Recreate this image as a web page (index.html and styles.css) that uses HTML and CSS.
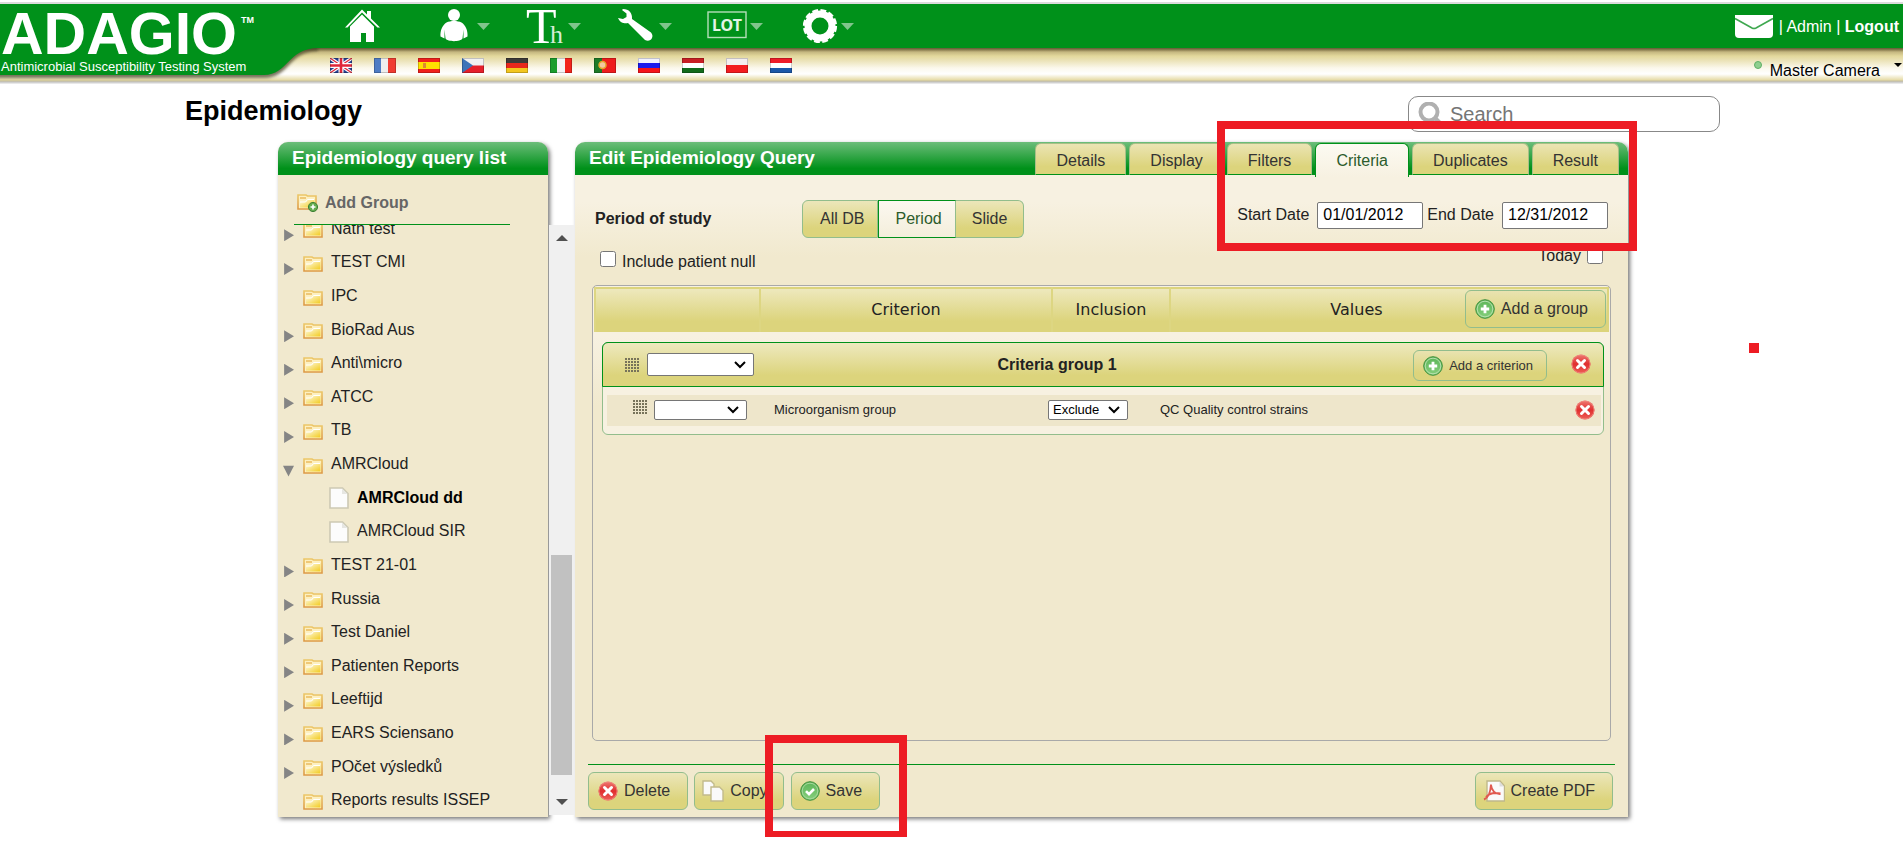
FILE: index.html
```html
<!DOCTYPE html>
<html lang="en">
<head>
<meta charset="utf-8">
<title>ADAGIO - Epidemiology</title>
<link rel="stylesheet" href="styles.css">
</head>
<body>
<svg class="defs" aria-hidden="true">
  <defs>
    <linearGradient id="gFolder" x1="0" y1="0" x2="1" y2="1"><stop offset="0" stop-color="#fffbe6"/><stop offset="1" stop-color="#f2cb1e"/></linearGradient>
    <linearGradient id="gFolderEdge" x1="0" y1="0" x2="0" y2="1"><stop offset="0" stop-color="#ecc768"/><stop offset="1" stop-color="#dd9a45"/></linearGradient>
    <linearGradient id="gGreen" x1="0" y1="0" x2="0" y2="1"><stop offset="0" stop-color="#5cb558"/><stop offset="1" stop-color="#86cf7c"/></linearGradient>
    <linearGradient id="gRed" x1="0" y1="0" x2="0" y2="1"><stop offset="0" stop-color="#ee7a72"/><stop offset=".5" stop-color="#e02f2f"/><stop offset="1" stop-color="#ee6058"/></linearGradient>
    <symbol id="folder" viewBox="0 0 20 16">
      <path d="M1 1h8l1.500 1H19v13H1z" fill="#fdf0c0" stroke="url(#gFolderEdge)" stroke-width="1.600"/>
      <path d="M3 3h6v2H3z" fill="#efc877"/>
      <path d="M3 13.500V8h6l2-2.500h6.500v8z" fill="url(#gFolder)"/>
      <path d="M3 8h5.500l2-2.500H17" fill="none" stroke="#fff" stroke-width="1"/>
    </symbol>
    <symbol id="file" viewBox="0 0 20 22">
      <path d="M1 1h12.500L19 6.500V21H1z" fill="#fcfcfc" stroke="#cdc9b4" stroke-width="1.600"/>
      <path d="M13 1.500V7h5.500z" fill="#e6e6e2"/>
    </symbol>
    <symbol id="cross" viewBox="0 0 20 20">
      <circle cx="10" cy="10" r="9.500" fill="url(#gRed)"/><circle cx="10" cy="10" r="9" fill="none" stroke="#f08a80" stroke-width=".8"/>
      <path d="M6.500 6.500l7 7M13.500 6.500l-7 7" stroke="#fff" stroke-width="3" stroke-linecap="round"/>
    </symbol>
    <symbol id="plus" viewBox="0 0 20 20">
      <circle cx="10" cy="10" r="9.300" fill="url(#gGreen)" stroke="#3f8f3d" stroke-width="1"/><circle cx="10" cy="10" r="7.800" fill="none" stroke="#b5dfae" stroke-width="1"/>
      <path d="M10 5.800v8.400M5.800 10h8.400" stroke="#fff" stroke-width="2.800"/>
    </symbol>
    <symbol id="check" viewBox="0 0 20 20">
      <circle cx="10" cy="10" r="9.300" fill="url(#gGreen)" stroke="#3f8f3d" stroke-width="1"/><circle cx="10" cy="10" r="7.800" fill="none" stroke="#a5d79d" stroke-width="1"/>
      <path d="M6 10.200l3 3 5-5.200" fill="none" stroke="#fff" stroke-width="2.600"/>
    </symbol>
    <symbol id="grip" viewBox="0 0 14 14">
      <path d="M0 1h14M0 4h14M0 7h14M0 10h14M0 13h14" stroke="#77735a" stroke-width="2" stroke-dasharray="2 1"/>
    </symbol>
    <symbol id="caret" viewBox="0 0 13 7"><path d="M0 0h13L6.500 7z" fill="#80c58c"/></symbol>
  </defs>
</svg>

<header class="top">
  <div class="bar-green"></div>
  <div class="bar-gold"></div>
  <svg class="logo-shape" width="330" height="44" viewBox="0 0 330 44" aria-hidden="true">
    <defs><filter id="soft" x="-5%" y="-20%" width="110%" height="150%"><feGaussianBlur stdDeviation="1.500"/></filter></defs>
    <path d="M-10-10V28H264C290 28 288 1 318 1V-10z" fill="#4d472c" opacity=".75" filter="url(#soft)" transform="translate(0 2)"/>
    <path d="M0 0V27H264C288 27 288 0 318 0z" fill="#00911a"/>
  </svg>
  <a class="logo" href="#">
    <span class="logo-name">ADAGIO<span class="tm">TM</span></span>
    <span class="logo-sub">Antimicrobial Susceptibility Testing System</span>
  </a>
  <nav class="nav" aria-label="Main">
    <a href="#" aria-label="Home"><svg width="40" height="36" viewBox="0 0 40 36"><path d="M5 18.500L17 6.500l12 12V34H21v-9h-5v9H5z" fill="#fff"/><path d="M0 19.500L17 1.500l5 5V3h4v7.500l9 9h-2.500L17 4.500 2.500 19.500z" fill="#fff"/></svg></a>
    <a href="#" aria-label="Patients"><svg width="40" height="36" viewBox="0 0 40 36"><circle cx="18" cy="7" r="6" fill="#fff"/><path d="M10.500 14.500c4-2 11-2 15 0 4 2.500 6.500 8 6 14l-4 2v-9l-1 9c-2 3.500-15 3.500-17 0l-1-9v9l-4-2c-.5-6 2-11.500 6-14z" fill="#fff"/></svg><svg width="13" height="7"><use href="#caret"/></svg></a>
    <a href="#" aria-label="Therapy"><svg width="40" height="36" viewBox="0 0 40 36"><text x="-1" y="35" class="glyph-t">T</text><text x="23" y="35" class="glyph-h">h</text></svg><svg width="13" height="7"><use href="#caret"/></svg></a>
    <a href="#" aria-label="Tools"><svg width="40" height="36" viewBox="0 0 40 36"><path d="M0 10c2 5 7 6 10 5l17 17c5 3 10-3 6-7.500L14 11C14.500 5 11 1 5 1l-1 1 4.500 3.500V9L5 11z" fill="#fff"/></svg><svg width="13" height="7"><use href="#caret"/></svg></a>
    <a href="#" aria-label="Lot"><svg width="40" height="36" viewBox="0 0 40 36"><rect x="-1" y="4" width="38" height="25.500" fill="none" stroke="#b4deba" stroke-width="1.400"/><text x="18" y="22.500" text-anchor="middle" class="glyph-lot">LOT</text></svg><svg width="13" height="7"><use href="#caret"/></svg></a>
    <a href="#" aria-label="Settings"><svg width="40" height="36" viewBox="0 0 40 36"><circle cx="20" cy="18" r="12" fill="none" stroke="#fff" stroke-width="7"/><circle cx="20" cy="18" r="15.300" fill="none" stroke="#fff" stroke-width="3.600" stroke-dasharray="5.600 2.411"/></svg><svg width="13" height="7"><use href="#caret"/></svg></a>
  </nav>
  <div class="flags">
    <button aria-label="English"><svg viewBox="0 0 22 15"><path fill="#27408f" d="M0 0h22v15H0z"/><path d="M0 0l22 15M22 0L0 15" stroke="#fff" stroke-width="3.500"/><path d="M0 0l22 15M22 0L0 15" stroke="#e0263a" stroke-width="1.200"/><path d="M11 0v15M0 7.500h22" stroke="#fff" stroke-width="5"/><path d="M11 0v15M0 7.500h22" stroke="#e0263a" stroke-width="2.600"/></svg></button>
    <button aria-label="French"><svg viewBox="0 0 22 15"><path fill="#4f7cc4" d="M0 0h8v15H0z"/><path fill="#eee" d="M7 0h8v15H7z"/><path fill="#f03c32" d="M14 0h8v15h-8z"/></svg></button>
    <button aria-label="Spanish"><svg viewBox="0 0 22 15"><path fill="#f0201c" d="M0 0h22v15H0z"/><path fill="#ffe000" d="M0 4h22v7H0z"/><path fill="#dd8a30" d="M5 5h3v5H5z"/></svg></button>
    <button aria-label="Czech"><svg viewBox="0 0 22 15"><path fill="#f1f1f1" d="M0 0h22v8H0z"/><path fill="#e5202a" d="M0 7.500h22V15H0z"/><path fill="#3d74b8" d="M0 0l11 7.500L0 15z"/></svg></button>
    <button aria-label="German"><svg viewBox="0 0 22 15"><path fill="#3d3a38" d="M0 0h22v5H0z"/><path fill="#e8271c" d="M0 5h22v5H0z"/><path fill="#f3c61e" d="M0 10h22v5H0z"/></svg></button>
    <button aria-label="Italian"><svg viewBox="0 0 22 15"><path fill="#1a9d2c" d="M0 0h8v15H0z"/><path fill="#f4f4f4" d="M7 0h8v15H7z"/><path fill="#f2241c" d="M15 0h7v15h-7z"/></svg></button>
    <button aria-label="Portuguese"><svg viewBox="0 0 22 15"><path fill="#1d7a27" d="M0 0h9v15H0z"/><path fill="#ee1c1c" d="M8 0h14v15H8z"/><circle cx="8.500" cy="7" r="3.500" fill="#f3c8a0" stroke="#e7a52a" stroke-width="1.500"/></svg></button>
    <button aria-label="Russian"><svg viewBox="0 0 22 15"><path fill="#f1f1ff" d="M0 0h22v5H0z"/><path fill="#1a1aee" d="M0 5h22v5H0z"/><path fill="#f5141c" d="M0 10h22v5H0z"/></svg></button>
    <button aria-label="Hungarian"><svg viewBox="0 0 22 15"><path fill="#c81e24" d="M0 0h22v5H0z"/><path fill="#fff" d="M0 5h22v5H0z"/><path fill="#126b1c" d="M0 10h22v5H0z"/></svg></button>
    <button aria-label="Polish"><svg viewBox="0 0 22 15"><path fill="#f4eff0" d="M0 0h22v8H0z"/><path fill="#f31c20" d="M0 7h22v8H0z"/></svg></button>
    <button aria-label="Dutch"><svg viewBox="0 0 22 15"><path fill="#ee1c28" d="M0 0h22v5H0z"/><path fill="#fff" d="M0 5h22v5H0z"/><path fill="#1c58a8" d="M0 10h22v5H0z"/></svg></button>
  </div>
  <div class="account">
    <a href="#" aria-label="Messages"><svg width="38" height="23" viewBox="0 0 38 23"><path d="M0 0h38v19q0 4-4 4H4q-4 0-4-4z" fill="#fff"/><path d="M0 3.500L17 13q2 1 4 0L38 3.500" fill="none" stroke="#3fa850" stroke-width="1.600"/></svg></a>
    <span>| <a href="#">Admin</a> | <a href="#"><b>Logout</b></a></span>
  </div>
  <button class="camera"><i class="dot"></i><span>Master Camera</span><i class="tri"></i></button>
</header>

<div class="page-head">
  <h1>Epidemiology</h1>
  <label class="search">
    <svg width="24" height="24" viewBox="0 0 24 24" aria-hidden="true"><circle cx="11" cy="10" r="8.500" fill="none" stroke="#b0b0b0" stroke-width="4"/><path d="M16.500 15.500l6 6" stroke="#b0b0b0" stroke-width="4"/></svg>
    <input type="search" placeholder="Search" aria-label="Search">
  </label>
</div>

<main class="main">
  <section class="panel list-panel">
    <header class="panel-head"><h2>Epidemiology query list</h2></header>
    <button class="add-group"><svg width="22" height="19" viewBox="0 0 22 19"><use href="#folder" width="20" height="16"/><circle cx="16" cy="13" r="4.600" fill="#63ab4e" stroke="#3f8136"/><path d="M16 10.500v5M13.500 13h5" stroke="#fff" stroke-width="1.600"/></svg>Add Group</button>
    <div class="tree-view">
      <ul class="tree">
        <li><i class="tw"></i><svg><use href="#folder"/></svg>Nath test</li>
        <li><i class="tw"></i><svg><use href="#folder"/></svg>TEST CMI</li>
        <li><i class="tw none"></i><svg><use href="#folder"/></svg>IPC</li>
        <li><i class="tw"></i><svg><use href="#folder"/></svg>BioRad Aus</li>
        <li><i class="tw"></i><svg><use href="#folder"/></svg>Anti\micro</li>
        <li><i class="tw"></i><svg><use href="#folder"/></svg>ATCC</li>
        <li><i class="tw"></i><svg><use href="#folder"/></svg>TB</li>
        <li><i class="tw open"></i><svg><use href="#folder"/></svg>AMRCloud</li>
        <li class="leaf current"><svg><use href="#file"/></svg>AMRCloud dd</li>
        <li class="leaf"><svg><use href="#file"/></svg>AMRCloud SIR</li>
        <li><i class="tw"></i><svg><use href="#folder"/></svg>TEST 21-01</li>
        <li><i class="tw"></i><svg><use href="#folder"/></svg>Russia</li>
        <li><i class="tw"></i><svg><use href="#folder"/></svg>Test Daniel</li>
        <li><i class="tw"></i><svg><use href="#folder"/></svg>Patienten Reports</li>
        <li><i class="tw"></i><svg><use href="#folder"/></svg>Leeftijd</li>
        <li><i class="tw"></i><svg><use href="#folder"/></svg>EARS Sciensano</li>
        <li><i class="tw"></i><svg><use href="#folder"/></svg>POčet výsledků</li>
        <li><i class="tw none"></i><svg><use href="#folder"/></svg>Reports results ISSEP</li>
      </ul>
    </div>
  </section>

  <div class="scroll" aria-hidden="true">
    <i class="up"></i>
    <div class="track"><div class="thumb"></div></div>
    <i class="down"></i>
  </div>

  <section class="panel edit-panel">
    <header class="panel-head">
      <h2>Edit Epidemiology Query</h2>
      <div class="tabs" role="tablist">
        <button role="tab">Details</button>
        <button role="tab">Display</button>
        <button role="tab">Filters</button>
        <button role="tab" class="active" aria-selected="true">Criteria</button>
        <button role="tab">Duplicates</button>
        <button role="tab">Result</button>
      </div>
    </header>

    <div class="period">
      <span class="period-label">Period of study</span>
      <div class="segments">
        <button>All DB</button><button class="active">Period</button><button>Slide</button>
      </div>
      <div class="dates">
        <label for="start">Start Date</label><input id="start" type="text" value="01/01/2012">
        <label for="end">End Date</label><input id="end" type="text" value="12/31/2012">
      </div>
    </div>
    <div class="options">
      <label class="include"><input type="checkbox">Include patient null</label>
      <label class="today">Today<input type="checkbox"></label>
    </div>

    <div class="criteria">
      <table class="criteria-head">
        <thead><tr>
          <th class="c-grip"></th><th class="c-crit">Criterion</th><th class="c-inc">Inclusion</th><th class="c-val">Values</th>
          <th class="c-act"><button class="btn clear add-top"><svg width="20" height="20"><use href="#plus"/></svg>Add a group</button></th>
        </tr></thead>
      </table>
      <div class="group">
        <div class="group-head">
          <div class="group-left"><svg width="14" height="14"><use href="#grip"/></svg><select aria-label="Group operator"><option></option></select></div>
          <h3>Criteria group 1</h3>
          <div class="group-right">
            <button class="btn clear small"><svg width="20" height="20"><use href="#plus"/></svg>Add a criterion</button>
            <button class="icon" aria-label="Remove group"><svg width="20" height="20"><use href="#cross"/></svg></button>
          </div>
        </div>
        <table class="rows">
          <tbody><tr>
            <td class="r-left"><div class="r-tools"><svg width="14" height="14"><use href="#grip"/></svg><select aria-label="Criterion operator"><option></option></select></div></td>
            <td class="r-crit">Microorganism group</td>
            <td class="r-inc"><select aria-label="Inclusion"><option>Exclude</option></select></td>
            <td>QC Quality control strains</td>
            <td class="r-act"><button class="icon" aria-label="Remove criterion"><svg width="20" height="20"><use href="#cross"/></svg></button></td>
          </tr></tbody>
        </table>
      </div>
    </div>

    <footer class="actions">
      <button class="btn b-delete"><svg width="20" height="20"><use href="#cross"/></svg>Delete</button>
      <button class="btn b-copy"><svg width="22" height="22" viewBox="0 0 22 22"><path d="M1 1h8l3 3v11H1z" fill="#fafafa" stroke="#c2bb8c" stroke-width="1.400"/><path d="M9 7h8.500l3.500 3.500V21H9z" fill="#fafafa" stroke="#c2bb8c" stroke-width="1.400"/></svg>Copy</button>
      <button class="btn b-save"><svg width="20" height="20"><use href="#check"/></svg>Save</button>
      <button class="btn b-pdf"><svg width="22" height="22" viewBox="0 0 22 22"><path d="M4 1h13l4.500 5v15H4z" fill="#fafafa" stroke="#bfb88a" stroke-width="1.400"/><path d="M16.500 1.500V6.500H21z" fill="#ddd"/><path d="M1 19.500c4-1.500 6.500-7 7-15M8 5c.5 5 4 9.500 9.500 9M3 17c3-3.500 9-4.500 14.500-3.500" fill="none" stroke="#e05a50" stroke-width="1.900"/></svg>Create PDF</button>
    </footer>
  </section>
</main>

<div class="mark mark-top"></div>
<div class="mark mark-save"></div>
<div class="mark-dot"></div>
</body>
</html>
```
FILE: styles.css
```css
* { box-sizing: border-box; }

body {
  margin: 0;
  padding-top: 2px;
  position: relative;
  background: #fff;
  color: #222;
  font: 16px/20px "Liberation Sans", Arial, sans-serif;
}

button {
  margin: 0;
  padding: 0;
  border: 0;
  background: none;
  color: inherit;
  font: inherit;
}

h1, h2, h3 { margin: 0; }
a { color: inherit; text-decoration: none; }
svg { display: block; flex: none; }
.defs { position: absolute; width: 0; height: 0; }

/* Top banner */
.top {
  position: relative;
  border-top: 2px solid #dcdcdc;
}
.bar-green { height: 44px; background: #00911a; }
.bar-gold {
  height: 36px;
  background: linear-gradient(#5f5b34 0, #8f8153 2px, #c5b780 4px, #e3d89c 8px, #ece4bb 13px, #fbf8ec 20px, #fff 26px, #e6dba6 32px, #c4bd9c 33px, #c4c4c4 34px, #f4f4f4 36px);
}
.logo-shape { position: absolute; left: 0; top: 44px; }
.logo {
  position: absolute;
  left: 1px;
  top: 4px;
  color: #fff;
  white-space: nowrap;
}
.logo-name { display: flex; font-size: 59px; line-height: 52px; font-weight: bold; }
.tm { margin: 7px 0 0 4px; font-size: 9px; line-height: 10px; }
.logo-sub { display: block; font-size: 13px; line-height: 13px; }

.nav { position: absolute; left: 345px; top: 4px; display: flex; }
.nav a { width: 91px; height: 36px; display: flex; align-items: center; gap: 1px; }
.nav svg { overflow: visible; }
.glyph-t { font: 50px "Liberation Serif", serif; fill: #fff; }
.glyph-h { font: 26px "Liberation Serif", serif; fill: #d5edd8; }
.glyph-lot { font: bold 16px "Noto Sans", sans-serif; fill: #e4f4e6; }

.flags { position: absolute; left: 330px; top: 54px; display: flex; gap: 22px; }
.flags button { width: 22px; height: 15px; }
.flags svg { width: 22px; height: 15px; outline: 1px solid #0003; outline-offset: -1px; }

.account {
  position: absolute;
  right: 4px;
  top: 11px;
  display: flex;
  align-items: center;
  gap: 6px;
  color: #fff;
}
.camera {
  position: absolute;
  right: 1px;
  top: 57px;
  display: flex;
  color: #000;
  line-height: 20px;
}
.dot { width: 8px; height: 8px; margin-right: 8px; border-radius: 50%; background: #8fcf8f; border: 1px solid #5fb066; }
.tri { margin: 2px 0 0 14px; border: 4px solid transparent; border-top-color: #000; border-bottom: 0; height: 4px; }

/* Title row */
.page-head {
  display: flex;
  justify-content: space-between;
  align-items: flex-start;
  height: 36px;
  margin: 12px 183px 10px 185px;
}
h1 { font-size: 27px; line-height: 30px; color: #000; }
.search {
  display: flex;
  align-items: center;
  gap: 6px;
  width: 312px;
  height: 36px;
  padding: 0 8px 0 9px;
  border: 1px solid #888;
  border-radius: 10px;
}
.search input { flex: 1; min-width: 0; border: 0; outline: 0; background: none; font: 20px/24px "Liberation Sans", Arial, sans-serif; }

/* Panels */
.main {
  display: grid;
  grid-template-columns: 270px 25px minmax(0, 1fr);
  column-gap: 1px;
  min-height: 675px;
  margin: 0 275px 20px 278px;
}
.panel {
  display: flex;
  flex-direction: column;
  min-width: 0;
  border-radius: 10px 10px 0 0;
  background: #f1e9ce;
  box-shadow: 2px 2px 4px #0008;
}
.panel-head {
  display: flex;
  justify-content: space-between;
  height: 33px;
  padding: 0 9px 0 14px;
  border-radius: 10px 10px 0 0;
  background: linear-gradient(#6cbd7a, #00911a 80%);
}
h2 { font-size: 19px; line-height: 32px; color: #fff; }

/* Query list */
.add-group {
  display: flex;
  align-items: center;
  gap: 6px;
  height: 50px;
  margin: 0 38px 0 16px;
  padding: 6px 0 0 3px;
  border-bottom: 1px solid #00911a;
  color: #666;
  font-weight: bold;
  line-height: 20px;
}
.add-group svg { margin-top: 2px; }
.tree-view { flex: 1; min-height: 0; overflow: hidden; }
.tree {
  display: grid;
  grid-auto-rows: 1fr;
  height: calc(100% + 13px);
  margin: -13px 0 0;
  padding: 0;
  list-style: none;
}
.tree li { display: flex; align-items: center; padding-left: 5px; }
.tree svg { width: 20px; height: 16px; margin: 3px 8px 0 9px; }
.tree .leaf { padding-left: 42px; }
.tree .leaf svg { width: 20px; height: 22px; margin: 1px 8px 0 9px; }
.tree .current { color: #000; font-weight: bold; }
.tw {
  width: 11px;
  height: 12px;
  margin-top: 13px;
  background: #858585;
  clip-path: polygon(10% 0, 100% 50%, 10% 100%);
}
.tw.open { clip-path: polygon(0 10%, 100% 10%, 50% 100%); }
.tw.none { background: none; }

.scroll {
  display: flex;
  flex-direction: column;
  align-items: center;
  margin: 83px 0 2px;
  padding: 10px 0;
  z-index: 1;
  background: #f0f0f0;
}
.up, .down { border: 6px solid transparent; }
.up { border-top: 0; border-bottom-color: #505050; }
.down { border-bottom: 0; border-top-color: #505050; }
.track { flex: 1; display: flex; align-items: flex-end; padding-bottom: 24px; }
.thumb { width: 21px; height: 220px; background: #c1c1c1; }

/* Editor */
.edit-panel { background: linear-gradient(#f7f1e1 60px, #f1e9ce 115px); }
.tabs { display: flex; gap: 3px; padding-top: 1px; }
.tabs button {
  height: 32px;
  padding: 3px 20px 0;
  border: 1px solid #a8bf87;
  border-bottom-color: #00911a;
  border-radius: 6px 6px 0 0;
  background: linear-gradient(#ebe4b4, #dcd47c 75%);
  color: #333;
}
.tabs .active {
  height: 34px;
  padding-bottom: 2px;
  border-color: #00911a;
  border-bottom: 0;
  background: linear-gradient(#fcfaf2, #f7f1e1);
  color: #2c5c2c;
}

.period { display: flex; align-items: center; height: 38px; margin: 25px 20px 0; }
.period-label { width: 207px; font-weight: bold; }
.segments { display: flex; }
.segments button {
  height: 38px;
  padding: 0 16px;
  border: 1px solid #92bd8c;
  border-left-width: 0;
  background: linear-gradient(#ece6ba, #dcd47c 75%);
  color: #333;
}
.segments button:first-child { padding: 0 13px 0 17px; border-left-width: 1px; border-radius: 6px 0 0 6px; }
.segments button:last-child { border-radius: 0 6px 6px 0; }
.segments .active {
  padding: 0 13px 0 16px;
  border: 1px solid #00911a;
  border-right-color: #92bd8c;
  background: linear-gradient(#fbf8f0, #f4eedb);
  color: #2c5c2c;
}
.dates { display: flex; align-items: center; gap: 8px; margin: -8px 0 0 auto; }
.dates input {
  width: 106px;
  height: 27px;
  padding: 1px 5px;
  border: 1px solid #767676;
  border-radius: 2px;
  background: #fff;
  color: #000;
  font: 16px "Liberation Sans", Arial, sans-serif;
}
.dates input + label { margin-left: -4px; }

.options { display: flex; justify-content: space-between; height: 47px; padding: 8px 25px 0; }
.options label { display: flex; height: 20px; align-items: center; gap: 6px; }
.options input { width: 16px; height: 16px; margin: 0; }
.options .include { align-items: flex-start; margin-top: 6px; }
.options .include input { margin-top: -1px; }

.criteria {
  flex: 1;
  margin: 0 17px;
  padding: 1px;
  border: 1px solid #a9a9a9;
  border-radius: 5px;
  background: linear-gradient(#f7f1e1 50px, #f1e9ce 120px);
}
.criteria-head {
  width: 100%;
  height: 45px;
  table-layout: fixed;
  border-collapse: collapse;
  border: 2px solid #dcd47c;
  border-width: 2px 2px 0;
  background: linear-gradient(#eee9bf, #dcd47c 75%);
}
.criteria-head th {
  padding: 0 0 2px;
  border-left: 2px solid #ddd682;
  font: 16px/20px "DejaVu Sans", sans-serif;
}
.c-grip { width: 165px; }
.c-crit { width: 292px; }
.c-inc { width: 118px; }
.criteria-head .c-act { position: relative; width: 66px; border: 0; }

.btn {
  display: flex;
  align-items: center;
  gap: 6px;
  height: 38px;
  padding: 0 17px 0 9px;
  border: 1px solid #92bd8c;
  border-radius: 6px;
  background: linear-gradient(#ece6ba, #dcd47c 75%);
  color: #333;
  font: 16px/20px "Liberation Sans", Arial, sans-serif;
  white-space: nowrap;
}
.add-top { position: absolute; right: 1px; top: 1px; }
.icon { display: flex; }

.group {
  margin: 10px 5px 0 8px;
  border: 1px solid #92bd8c;
  border-radius: 6px;
  background: #f7f1e1;
}
.group-head {
  display: grid;
  grid-template-columns: 154px 1fr 246px;
  align-items: center;
  height: 45px;
  margin: -1px;
  border: 1px solid #00911a;
  border-radius: 6px 6px 0 0;
  background: linear-gradient(#eee9bf, #dcd47c 75%);
}
.group-left { display: flex; align-items: center; gap: 8px; padding-left: 22px; }
.group-left select { width: 107px; height: 23px; }
h3 { font-size: 16px; text-align: center; }
.group-right { display: flex; justify-content: flex-end; align-items: center; gap: 24px; padding-right: 12px; }
.group-right .icon { margin-bottom: 2px; }
.group .small { height: 31px; margin-top: 2px; padding-right: 13px; font-size: 13px; }
select {
  appearance: none;
  padding: 0 4px;
  border: 1px solid #767676;
  border-radius: 2px;
  background: #fff url("data:image/svg+xml,%3Csvg xmlns='http://www.w3.org/2000/svg' width='12' height='8'%3E%3Cpath d='M1 1l5 5 5-5' fill='none' stroke='%23000' stroke-width='2'/%3E%3C/svg%3E") no-repeat right 7px center;
  color: #000;
  font: 13px "Liberation Sans", Arial, sans-serif;
}
.clear { background: linear-gradient(#e9e3b0, #dcd47c 75%); }

.rows { width: calc(100% - 6px); margin: 9px 2px 8px 4px; table-layout: fixed; border-collapse: collapse; background: #eee6cb; font-size: 13px; }
.rows td { height: 31px; padding: 0 0 2px; }
.r-tools { display: flex; gap: 7px; padding-left: 26px; }
.r-tools select { width: 93px; height: 20px; }
.rows .r-left { width: 167px; }
.rows .r-crit { width: 274px; }
.rows .r-inc { width: 112px; }
.r-inc select { width: 80px; height: 20px; display: block; }
.rows .r-act { width: 26px; }

/* Buttons under the criteria */
.actions { display: flex; margin: 23px 13px 7px; padding: 7px 2px 0 0; border-top: 1px solid #00911a; }
.b-copy { margin-left: 6px; padding: 0 15px 0 7px; }
.b-save { margin-left: 7px; padding-left: 8px; }
.b-pdf { margin-left: auto; padding-left: 7px; }

/* Red highlight frames drawn over the page */
.mark { position: absolute; border: 8px solid #ed1c24; pointer-events: none; z-index: 2; }
.mark-top { left: 1217px; top: 121px; width: 420px; height: 130px; }
.mark-save { left: 765px; top: 735px; width: 142px; height: 104px; }
.mark-dot { position: absolute; left: 1749px; top: 343px; width: 10px; height: 10px; background: #ed1c24; }
```
